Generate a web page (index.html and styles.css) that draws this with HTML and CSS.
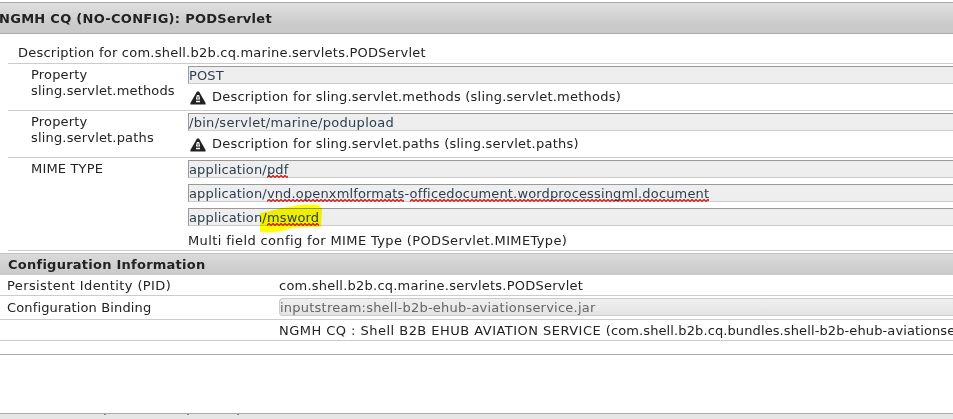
FILE: index.html
```
<!DOCTYPE html>
<html lang="en">
<head>
    <meta charset="UTF-8">
    <title>PODServlet</title>
    <link rel="stylesheet" href="styles.css">
</head>
<body>
    <div class="dialog-title"><span class="t-title">NGMH CQ (NO-CONFIG): PODServlet</span></div>
    <div class="config">
        <div class="intro">Description for com.shell.b2b.cq.marine.servlets.PODServlet</div>
        <div class="row">
            <div class="label">Property<br>sling.servlet.methods</div>
            <div class="value">
                <div class="field">POST</div>
                <div class="hint">
                    <svg class="alert" viewBox="0 0 16 14"><path d="M7 .5h2L15.6 12v1.6H.4V12z" fill="#222"/><path d="M6.8 4h2.4l.9 4.5H5.9zM6 9.7h4v1.6H6z" fill="#fff"/><path d="M7.5 5.4h1v2.4h-1z" fill="#222"/></svg>
                    <span>Description for sling.servlet.methods (sling.servlet.methods)</span>
                </div>
            </div>
        </div>
        <div class="row">
            <div class="label">Property<br>sling.servlet.paths</div>
            <div class="value">
                <div class="field path">/bin/servlet/marine/podupload</div>
                <div class="hint">
                    <svg class="alert" viewBox="0 0 16 14"><path d="M7 .5h2L15.6 12v1.6H.4V12z" fill="#222"/><path d="M6.8 4h2.4l.9 4.5H5.9zM6 9.7h4v1.6H6z" fill="#fff"/><path d="M7.5 5.4h1v2.4h-1z" fill="#222"/></svg>
                    <span>Description for sling.servlet.paths (sling.servlet.paths)</span>
                </div>
            </div>
        </div>
        <div class="row mime">
            <div class="label">MIME TYPE</div>
            <div class="value">
                <div class="field">application/<span class="typo">pdf</span></div>
                <div class="field">application/<span class="typo">vnd.openxmlformats</span>-<span class="typo">officedocument.wordprocessingml.document</span></div>
                <div class="field">application/<span class="typo">msword</span>
                    <svg class="marker" viewBox="0 0 64 30"><path d="M1 10C14 8 20 5 30 4C42 1 54 1 60 2L63 6L62 24C46 24 36 24 30 26C20 29 10 30 1 29z" fill="#ffff00"/></svg>
                </div>
                <div class="note">Multi field config for MIME Type (PODServlet.MIMEType)</div>
            </div>
        </div>
    </div>
    <div class="section-title">Configuration Information</div>
    <div class="info">
        <div class="info-row pid"><div class="key">Persistent Identity (PID)</div><div class="val">com.shell.b2b.cq.marine.servlets.PODServlet</div></div>
        <div class="info-row binding"><div class="key">Configuration Binding</div><div class="disabled">inputstream:shell-b2b-ehub-aviationservice.jar</div></div>
        <div class="info-row bundle"><div class="key"></div><div class="val"><span class="bundle-name">NGMH CQ : Shell B2B EHUB AVIATION SERVICE </span>(com.shell.b2b.cq.bundles.shell-b2b-ehub-aviationservice)</div></div>
    </div>
    <div class="spacer"></div>
    <div class="buttons"></div>
    <div class="footer"><i></i><i></i><i></i></div>
</body>
</html>
```

FILE: styles.css
```
* { box-sizing: border-box; margin: 0; padding: 0; }
body {
    width: 953px;
    height: 419px;
    padding-top: 2px;
    overflow: hidden;
    background: #fff;
    color: #222;
    font: 13px/16px Verdana, "DejaVu Sans", sans-serif;
    letter-spacing: 0.23px;
}
.dialog-title {
    height: 32px;
    line-height: 31px;
    border-top: 1px solid #aaa;
    border-bottom: 1px solid #aaa;
    background: linear-gradient(#e0e0e0, #c9c9c9 75%);
    font-weight: bold;
    letter-spacing: 0.29px;
    white-space: nowrap;
}
.t-title { margin-left: -1px; }
.config { padding-left: 8px; }
.intro { height: 30px; padding: 11px 0 0 10px; border-bottom: 1px solid #ccc; }
.row { display: flex; height: 47px; border-bottom: 1px solid #ccc; }
.label { width: 180px; padding: 3px 0 0 23px; flex: none; letter-spacing: 0.17px; }
.value { flex: 1; padding-top: 2px; }
.field {
    position: relative;
    height: 18px;
    border: 1px solid #ccc;
    border-top-color: #999;
    border-left-color: #999;
    border-right: none;
    background: #eee;
    color: #2c3e50;
    letter-spacing: 0.15px;
    line-height: 17px;
    white-space: nowrap;
}
.path { letter-spacing: 0.29px; }
.hint { display: flex; gap: 6px; padding: 5px 0 0 2px; }
.alert { width: 16px; height: 14px; margin-top: 2px; }
.mime { height: 93px; }
.mime .field { margin-bottom: 6px; }
.note { padding-top: 1px; letter-spacing: 0.37px; }
.typo {
    position: relative;
    z-index: 1;
    padding-bottom: 1px;
    background: url("data:image/svg+xml,%3Csvg xmlns='http://www.w3.org/2000/svg' width='4' height='3'%3E%3Cpath d='M0 2.5L2 .5L4 2.5' fill='none' stroke='%23e01010' stroke-width='1.3'/%3E%3C/svg%3E") repeat-x left bottom;
}
.marker {
    position: absolute;
    left: 70px;
    top: -6px;
    width: 64px;
    height: 30px;
    mix-blend-mode: multiply;
}
.section-title {
    height: 22px;
    margin-top: 2px;
    padding-left: 8px;
    border-top: 1px solid #c4c4c4;
    background: linear-gradient(#dadada, #c9c9c9);
    font-weight: bold;
    letter-spacing: 0.25px;
    line-height: 22px;
}
.info-row { display: flex; border-bottom: 1px solid #ccc; white-space: nowrap; }
.key { width: 279px; padding-left: 7px; flex: none; }
.pid { height: 21px; line-height: 21px; }
.pid .key { letter-spacing: 0.4px; }
.binding { height: 24px; line-height: 23px; }
.binding .key { letter-spacing: 0.14px; }
.bundle { height: 21px; line-height: 21px; }
.bundle .val { width: 674px; overflow: hidden; letter-spacing: 0.11px; }
.bundle-name { letter-spacing: 0.47px; }
.disabled {
    flex: 1;
    height: 18px;
    margin-top: 2px;
    border: 1px solid #ccc;
    border-right: none;
    border-radius: 4px 0 0 4px;
    background: linear-gradient(#efefef, #e4e4e4);
    color: #666;
    line-height: 17px;
}
.spacer { height: 14px; border-bottom: 1px solid #aaa; }
.buttons { height: 59px; border-bottom: 1px solid #aaa; }
.footer { display: flex; height: 5px; padding-left: 104px; background: #e6e6e6; }
.footer i { width: 2px; height: 1px; background: #888; }
.footer i:nth-child(2) { margin-left: 81px; }
.footer i:nth-child(3) { margin-left: 48px; }
```
